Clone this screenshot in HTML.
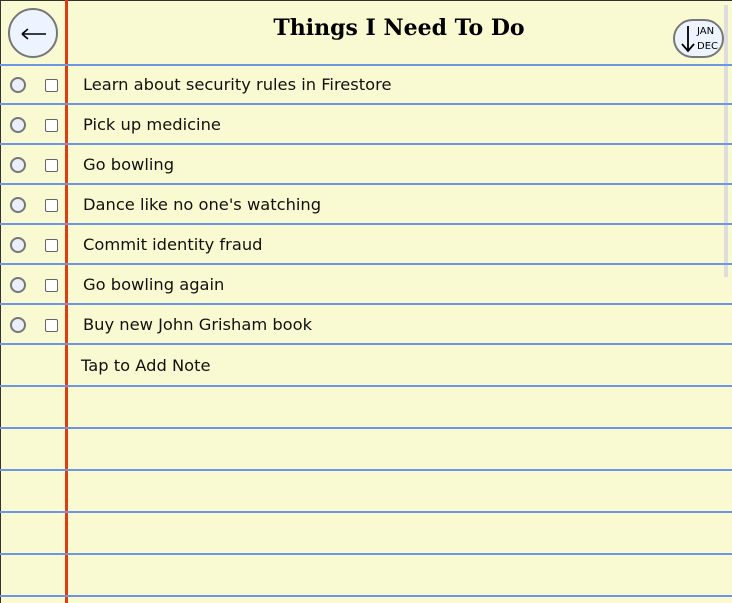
<!DOCTYPE html>
<html><head><style>
html,body{margin:0;padding:0;width:732px;height:603px;overflow:hidden;background:#fafad2;}
body{position:relative;font-family:"DejaVu Sans","Liberation Sans",sans-serif;}
.frame{position:absolute;left:0;top:0;width:732px;height:603px;border-left:1px solid #333;border-top:1px solid #333;box-sizing:border-box;}
.red{position:absolute;left:65px;top:0;width:3px;height:603px;background:#e03c10;}
.hl{position:absolute;left:0;width:732px;height:2px;background:#6f96e0;}
.back{position:absolute;left:8px;top:8px;width:50px;height:50px;border:2px solid #777;border-radius:50%;background:#eef4ff;box-sizing:border-box;}
.title{position:absolute;left:68px;width:662px;top:15px;text-align:center;font-family:"DejaVu Serif","Liberation Serif",serif;font-weight:bold;font-size:22px;}
.sort{position:absolute;left:673px;top:19px;width:51px;height:39px;border:2px solid #777;border-radius:20px;background:#eef4ff;box-sizing:border-box;}
.sort .t{position:absolute;left:22px;font-size:10px;line-height:10px;}
.scroll{position:absolute;left:724px;top:5px;width:4px;height:272px;background:#ddd;}
.rad{position:absolute;left:10px;width:16px;height:16px;border:2px solid #777;border-radius:50%;background:#e9eefa;box-sizing:border-box;}
.chk{position:absolute;left:45px;width:13px;height:13px;border:1px solid #666;border-radius:2px;background:#fff;box-sizing:border-box;}
.txt{position:absolute;left:83px;font-size:16.3px;color:#111;}
</style></head><body>
<div class="frame"></div>
<div class="red"></div>
<div class="back"><svg width="46" height="46" style="position:absolute;left:0;top:0"><path d="M12 24H36M12 24L18 19M12 24L18 29" stroke="#000" stroke-width="1.6" fill="none"/></svg></div>
<div class="title">Things I Need To Do</div>
<div class="sort"><svg width="20" height="35" style="position:absolute;left:3px;top:0"><path d="M10 5V30M4 23L10 30L16 23" stroke="#000" stroke-width="1.8" fill="none"/></svg><span class="t" style="top:6px">JAN</span><span class="t" style="top:21px">DEC</span></div>
<div class="scroll"></div>

<div class="hl" style="top:64px"></div>
<div class="hl" style="top:103px"></div>
<div class="hl" style="top:143px"></div>
<div class="hl" style="top:183px"></div>
<div class="hl" style="top:223px"></div>
<div class="hl" style="top:263px"></div>
<div class="hl" style="top:303px"></div>
<div class="hl" style="top:343px"></div>
<div class="hl" style="top:385px"></div>
<div class="hl" style="top:427px"></div>
<div class="hl" style="top:469px"></div>
<div class="hl" style="top:511px"></div>
<div class="hl" style="top:553px"></div>
<div class="hl" style="top:595px"></div>

<div class="rad" style="top:77px"></div><div class="chk" style="top:79px"></div><div class="txt" style="top:75px">Learn about security rules in Firestore</div>
<div class="rad" style="top:117px"></div><div class="chk" style="top:119px"></div><div class="txt" style="top:115px">Pick up medicine</div>
<div class="rad" style="top:157px"></div><div class="chk" style="top:159px"></div><div class="txt" style="top:155px">Go bowling</div>
<div class="rad" style="top:197px"></div><div class="chk" style="top:199px"></div><div class="txt" style="top:195px">Dance like no one's watching</div>
<div class="rad" style="top:237px"></div><div class="chk" style="top:239px"></div><div class="txt" style="top:235px">Commit identity fraud</div>
<div class="rad" style="top:277px"></div><div class="chk" style="top:279px"></div><div class="txt" style="top:275px">Go bowling again</div>
<div class="rad" style="top:317px"></div><div class="chk" style="top:319px"></div><div class="txt" style="top:315px">Buy new John Grisham book</div>
<div class="txt" style="top:356px;left:81px">Tap to Add Note</div>
</body></html>
